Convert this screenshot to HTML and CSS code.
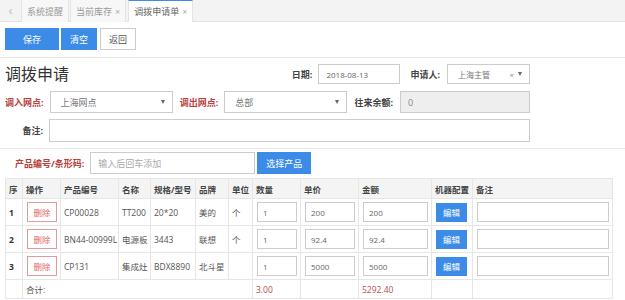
FILE: index.html
```html
<!DOCTYPE html>
<html lang="zh-CN">
<head>
  <meta charset="UTF-8">
  <meta name="viewport" content="width=device-width, initial-scale=1.0">
  <title>调拨申请单</title>
  <link rel="stylesheet" href="styles.css">
</head>
<body>
  <div class="tab-bar">
    <span class="tab-prev">&lsaquo;</span>
    <div class="tab">系统提醒</div>
    <div class="tab">当前库存 <span class="tab-close">×</span></div>
    <div class="tab active">调拨申请单 <span class="tab-close">×</span></div>
  </div>

  <div class="toolbar">
    <button class="btn btn-primary btn-save">保存</button>
    <button class="btn btn-primary">清空</button>
    <button class="btn btn-default">返回</button>
  </div>

  <div class="form-panel">
    <div class="form-row row-head">
      <h1 class="page-title">调拨申请</h1>
      <label class="field-label">日期:</label>
      <input class="field-input date-input" type="text" value="2018-08-13">
      <label class="field-label label-applicant">申请人:</label>
      <div class="fake-select applicant-select">
        <span>上海主管</span>
        <span class="select-clear">×</span>
        <span class="caret"></span>
      </div>
    </div>

    <div class="form-row">
      <label class="field-label required">调入网点:</label>
      <div class="fake-select site-select">
        <span>上海网点</span>
        <span class="caret"></span>
      </div>
      <label class="field-label required">调出网点:</label>
      <div class="fake-select site-select">
        <span>总部</span>
        <span class="caret"></span>
      </div>
      <label class="field-label">往来余额:</label>
      <input class="field-input balance-input" type="text" value="0" readonly>
    </div>

    <div class="form-row">
      <label class="field-label note-label">备注:</label>
      <input class="field-input note-input" type="text">
    </div>
  </div>

  <div class="product-panel">
    <div class="product-search">
      <label class="field-label required">产品编号/条形码:</label>
      <input class="field-input search-input" type="text" placeholder="输入后回车添加">
      <button class="btn btn-primary btn-pick">选择产品</button>
    </div>

    <table class="item-table">
      <colgroup>
        <col style="width:17px"><col style="width:38px"><col style="width:58px"><col style="width:32px">
        <col style="width:45px"><col style="width:33px"><col style="width:24px"><col style="width:48px">
        <col style="width:58px"><col style="width:73px"><col style="width:41px"><col style="width:140px">
      </colgroup>
      <thead>
        <tr>
          <th>序</th><th>操作</th><th>产品编号</th><th>名称</th><th>规格/型号</th><th>品牌</th>
          <th>单位</th><th>数量</th><th>单价</th><th>金额</th><th>机器配置</th><th>备注</th>
        </tr>
      </thead>
      <tbody>
        <tr>
          <td class="row-no">1</td>
          <td><button class="btn-del">删除</button></td>
          <td>CP00028</td><td>TT200</td><td>20*20</td><td>美的</td><td>个</td>
          <td><input class="cell-input" type="text" value="1"></td>
          <td><input class="cell-input" type="text" value="200"></td>
          <td><input class="cell-input" type="text" value="200"></td>
          <td><button class="btn-edit">编辑</button></td>
          <td><input class="cell-input" type="text"></td>
        </tr>
        <tr>
          <td class="row-no">2</td>
          <td><button class="btn-del">删除</button></td>
          <td>BN44-00999L</td><td>电源板</td><td>3443</td><td>联想</td><td>个</td>
          <td><input class="cell-input" type="text" value="1"></td>
          <td><input class="cell-input" type="text" value="92.4"></td>
          <td><input class="cell-input" type="text" value="92.4"></td>
          <td><button class="btn-edit">编辑</button></td>
          <td><input class="cell-input" type="text"></td>
        </tr>
        <tr>
          <td class="row-no">3</td>
          <td><button class="btn-del">删除</button></td>
          <td>CP131</td><td>集成灶</td><td>BDX8890</td><td>北斗星</td><td></td>
          <td><input class="cell-input" type="text" value="1"></td>
          <td><input class="cell-input" type="text" value="5000"></td>
          <td><input class="cell-input" type="text" value="5000"></td>
          <td><button class="btn-edit">编辑</button></td>
          <td><input class="cell-input" type="text"></td>
        </tr>
        <tr class="total-row">
          <td></td>
          <td colspan="6" class="total-label">合计:</td>
          <td class="total-num">3.00</td>
          <td></td>
          <td class="total-num">5292.40</td>
          <td></td>
          <td></td>
        </tr>
      </tbody>
    </table>
  </div>
</body>
</html>
```

FILE: styles.css
```css
* {
  box-sizing: border-box;
}

body {
  margin: 0;
  background-color: #fff;
  font-family: "Open Sans", "Noto Sans CJK SC", sans-serif;
  font-size: 9px;
  color: #555;
}

/* Tabs */
.tab-bar {
  display: flex;
  height: 22px;
  background-color: #f3f3f3;
  border-bottom: 1px solid #e2e2e2;
}

.tab-prev {
  width: 21px;
  line-height: 20px;
  text-align: center;
  font-size: 13px;
  color: #bbb;
}

.tab {
  display: flex;
  align-items: center;
  gap: 3px;
  height: 22px;
  padding: 0 5px;
  margin-right: 1px;
  background-color: #f7f7f7;
  border-left: 1px solid #e4e4e4;
  border-right: 1px solid #e4e4e4;
  color: #999;
  font-size: 9px;
}

.tab.active {
  margin-left: 1px;
  background-color: #fff;
  border-top: 1px solid #3c8ce7;
  color: #666;
}

.tab-close {
  color: #aaa;
  font-size: 9px;
}

/* Buttons */
.toolbar {
  display: flex;
  gap: 2px;
  padding: 6px 5px 7px;
  border-bottom: 1px solid #e8e8e8;
}

.btn {
  height: 22px;
  padding: 0 8px;
  border: 1px solid transparent;
  font-family: inherit;
  font-size: 9px;
  cursor: pointer;
}

.btn-primary {
  background-color: #3c8ce7;
  border-color: #3c8ce7;
  color: #fff;
}

.btn-default {
  margin-left: 1px;
  background-color: #fff;
  border-color: #ccc;
  color: #555;
}

.btn-save {
  width: 54px;
}

/* Form */
.form-panel {
  padding: 6px 0 0 5px;
  width: 530px;
}

.form-row {
  display: flex;
  align-items: center;
  margin-bottom: 6px;
}

.row-head {
  margin-bottom: 7px;
}

.page-title {
  flex: 1;
  margin: 0;
  font-size: 16px;
  line-height: 20px;
  font-weight: normal;
  color: #333;
}

.field-label {
  flex-shrink: 0;
  margin-right: 6px;
  font-weight: bold;
  font-size: 9px;
  color: #444;
}

.field-label.required {
  color: #b8403c;
}

.label-applicant {
  margin-left: 10px;
}

.note-label {
  width: 38px;
  text-align: right;
}

.field-input {
  height: 22px;
  padding: 0 7px;
  border: 1px solid #ccc;
  font-family: inherit;
  font-size: 9px;
  color: #666;
  outline: none;
}

.date-input {
  width: 82px;
  height: 20px;
  font-size: 8px;
}

.balance-input {
  flex: 1;
  margin-left: 1px;
  background-color: #eee;
  color: #888;
}

.note-input {
  flex: 1;
  height: 23px;
}

.fake-select {
  display: flex;
  align-items: center;
  height: 22px;
  padding: 0 7px 0 10px;
  border: 1px solid #ccc;
  background-color: #fff;
  color: #777;
}

.fake-select span:first-child {
  flex: 1;
}

.site-select {
  width: 127px;
  margin-right: 7px;
}

.applicant-select {
  width: 83px;
  height: 20px;
  margin-left: 1px;
  font-size: 8px;
}

.select-clear {
  margin-right: 4px;
  font-size: 8px;
  color: #888;
}

.caret {
  width: 0;
  height: 0;
  border-left: 2.5px solid transparent;
  border-right: 2.5px solid transparent;
  border-top: 4px solid #666;
}

/* Products */
.product-panel {
  margin-top: 6px;
  border-top: 1px solid #e8e8e8;
  padding: 3px 0 0 5px;
}

.product-search {
  display: flex;
  align-items: center;
  padding-left: 10px;
  margin-bottom: 4px;
}

.search-input {
  width: 165px;
  margin-left: 0;
  color: #aaa;
}

.search-input::placeholder {
  color: #aaa;
}

.btn-pick {
  margin-left: 2px;
  width: 54px;
  padding: 0;
}

.item-table {
  width: 607px;
  border-collapse: collapse;
  table-layout: fixed;
}

.item-table th,
.item-table td {
  border: 1px solid #e6e6e6;
  padding: 0 2px 0 3px;
  text-align: left;
  white-space: nowrap;
  overflow: hidden;
  font-size: 8.5px;
}

.item-table th {
  height: 20px;
  background-color: #f4f4f4;
  font-weight: bold;
  color: #444;
}

.item-table td {
  height: 27px;
  color: #555;
}

.item-table .row-no {
  font-weight: bold;
  color: #333;
}

.btn-del {
  display: block;
  width: 30px;
  height: 20px;
  padding: 0;
  margin-left: 1px;
  border: 1px solid #e39a9a;
  background-color: #fff;
  color: #e0686a;
  font-family: inherit;
  font-size: 8.5px;
}

.btn-edit {
  display: block;
  width: 31px;
  height: 19px;
  padding: 0;
  margin-left: 1px;
  border: none;
  background-color: #3c8ce7;
  color: #fff;
  font-family: inherit;
  font-size: 8.5px;
}

.cell-input {
  display: block;
  width: calc(100% - 2px);
  height: 20px;
  margin-left: 1px;
  padding: 0 5px;
  border: 1px solid #ccc;
  font-family: inherit;
  font-size: 8px;
  color: #666;
  outline: none;
}

.total-row td {
  height: 19px;
}

.total-label {
  padding-left: 5px;
  color: #b8504c;
}

.item-table .total-num {
  color: #b8504c;
}
```
